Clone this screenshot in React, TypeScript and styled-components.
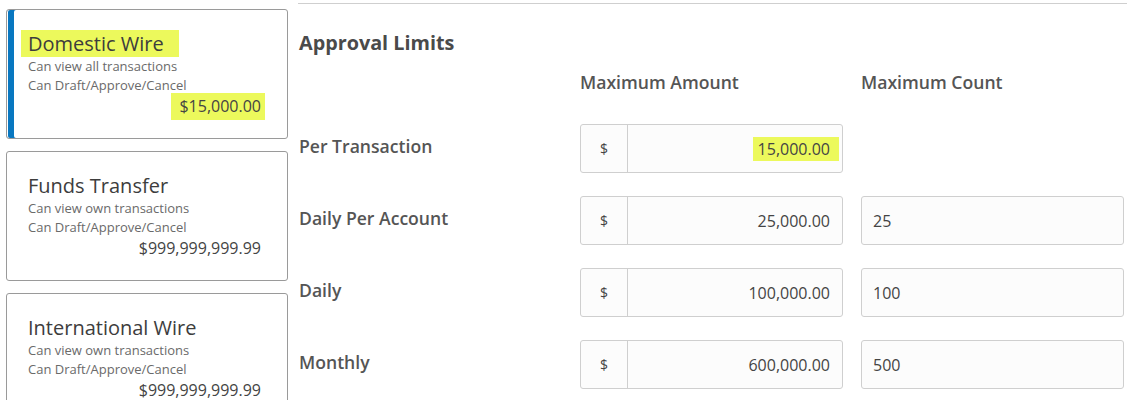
import React from 'react';
import styled, { createGlobalStyle } from 'styled-components';

const GlobalStyle = createGlobalStyle`
  body {
    margin: 0;
    background: #fff;
    font-family: 'Open Sans', 'Noto Sans', sans-serif;
    color: #444;
  }
  * {
    box-sizing: border-box;
  }
`;

// data
const entitlements = [
  { title: 'Domestic Wire', view: 'Can view all transactions', perms: 'Can Draft/Approve/Cancel', amount: '$15,000.00', active: true },
  { title: 'Funds Transfer', view: 'Can view own transactions', perms: 'Can Draft/Approve/Cancel', amount: '$999,999,999.99', active: false },
  { title: 'International Wire', view: 'Can view own transactions', perms: 'Can Draft/Approve/Cancel', amount: '$999,999,999.99', active: false }
];

const limits = [
  { label: 'Per Transaction', amount: '15,000.00', count: null, mark: true },
  { label: 'Daily Per Account', amount: '25,000.00', count: '25', mark: false },
  { label: 'Daily', amount: '100,000.00', count: '100', mark: false },
  { label: 'Monthly', amount: '600,000.00', count: '500', mark: false }
];

const HIGHLIGHT = '#ecf95c';

const Page = styled.div`
  display: flex;
  align-items: flex-start;
  width: 1140px;
  height: 400px;
  overflow: hidden;
`;

const Sidebar = styled.div`
  display: flex;
  flex-direction: column;
  gap: 12px;
  width: 288px;
  padding: 9px 0 0 6px;
  flex-shrink: 0;
`;

const Card = styled.div<{ $active: boolean }>`
  height: 130px;
  flex-shrink: 0;
  border: 1px solid #9a9a9a;
  border-radius: 3px;
  padding: 20px 22px 0 14px;
  background: #fff;
  box-shadow: ${({ $active }) => ($active ? 'inset 1px 0 0 #fff, inset 7px 0 0 #0877c0' : 'none')};
`;

const CardTitle = styled.div`
  font-size: 20px;
  line-height: 27px;
  color: #3d3d3d;
`;

const Mark = styled.span<{ $on: boolean }>`
  background: ${({ $on }) => ($on ? HIGHLIGHT : 'transparent')};
`;

const TitleMark = styled(Mark)`
  display: inline-block;
  padding: 0 15px 0 7px;
`;

const CardLine = styled.div`
  font-size: 13px;
  line-height: 19px;
  color: #6a6a6a;
  padding-left: 7px;
`;

const CardAmount = styled.div`
  text-align: right;
  font-size: 16px;
  line-height: 27px;
  margin-top: -2px;
  color: #444;
`;

const AmountMark = styled(Mark)`
  display: inline-block;
  padding: 0 4px 0 8px;
`;

const Panel = styled.div`
  margin: 3px 0 0 10px;
  width: 829px;
  border-top: 1px solid #cfcfcf;
  padding-top: 25px;
`;

const PanelTitle = styled.h2`
  margin: 0 0 0 1px;
  font-size: 19.8px;
  line-height: 27px;
  font-weight: 700;
  color: #4a4a4a;
`;

const Grid = styled.div`
  display: grid;
  grid-template-columns: 263px 263px 263px;
  column-gap: 18px;
  row-gap: 23px;
  margin-top: 14px;
  padding-left: 1px;
`;

const ColHead = styled.div`
  font-size: 17.6px;
  line-height: 24px;
  font-weight: 600;
  color: #555;
  margin-bottom: 7px;
`;

const RowLabel = styled.div`
  display: flex;
  align-items: center;
  padding-bottom: 6px;
  font-size: 17.6px;
  font-weight: 600;
  color: #555;
  white-space: nowrap;
`;

const InputGroup = styled.div`
  display: flex;
  height: 49px;
  border: 1px solid #cfcfcf;
  border-radius: 3px;
  background: #fcfcfc;
`;

const Addon = styled.div`
  width: 47px;
  display: flex;
  align-items: center;
  justify-content: center;
  border-right: 1px solid #cfcfcf;
  font-size: 14px;
  color: #444;
`;

const Field = styled.div<{ $right?: boolean }>`
  flex: 1;
  display: flex;
  align-items: center;
  justify-content: ${({ $right }) => ($right ? 'flex-end' : 'flex-start')};
  padding: ${({ $right }) => ($right ? '0 3px 0 0' : '0 0 0 11px')};
  font-size: 16px;
  color: #444;
`;

const FieldMark = styled(Mark)`
  line-height: 24px;
  padding: 0 9px 0 5px;
`;

const Empty = styled.div``;

export default function App() {
  return (
    <>
      <GlobalStyle />
      <Page>
        <Sidebar>
          {entitlements.map((e) => (
            <Card key={e.title} $active={e.active}>
              <CardTitle>
                <TitleMark $on={e.active}>{e.title}</TitleMark>
              </CardTitle>
              <CardLine>{e.view}</CardLine>
              <CardLine>{e.perms}</CardLine>
              <CardAmount>
                <AmountMark $on={e.active}>{e.amount}</AmountMark>
              </CardAmount>
            </Card>
          ))}
        </Sidebar>

        <Panel>
          <PanelTitle>Approval Limits</PanelTitle>
          <Grid>
            <Empty />
            <ColHead>Maximum Amount</ColHead>
            <ColHead>Maximum Count</ColHead>
            {limits.map((l) => (
              <React.Fragment key={l.label}>
                <RowLabel>{l.label}</RowLabel>
                <InputGroup>
                  <Addon>$</Addon>
                  <Field $right>
                    <FieldMark $on={l.mark}>{l.amount}</FieldMark>
                  </Field>
                </InputGroup>
                {l.count ? (
                  <InputGroup>
                    <Field>{l.count}</Field>
                  </InputGroup>
                ) : (
                  <Empty />
                )}
              </React.Fragment>
            ))}
          </Grid>
        </Panel>
      </Page>
    </>
  );
}
